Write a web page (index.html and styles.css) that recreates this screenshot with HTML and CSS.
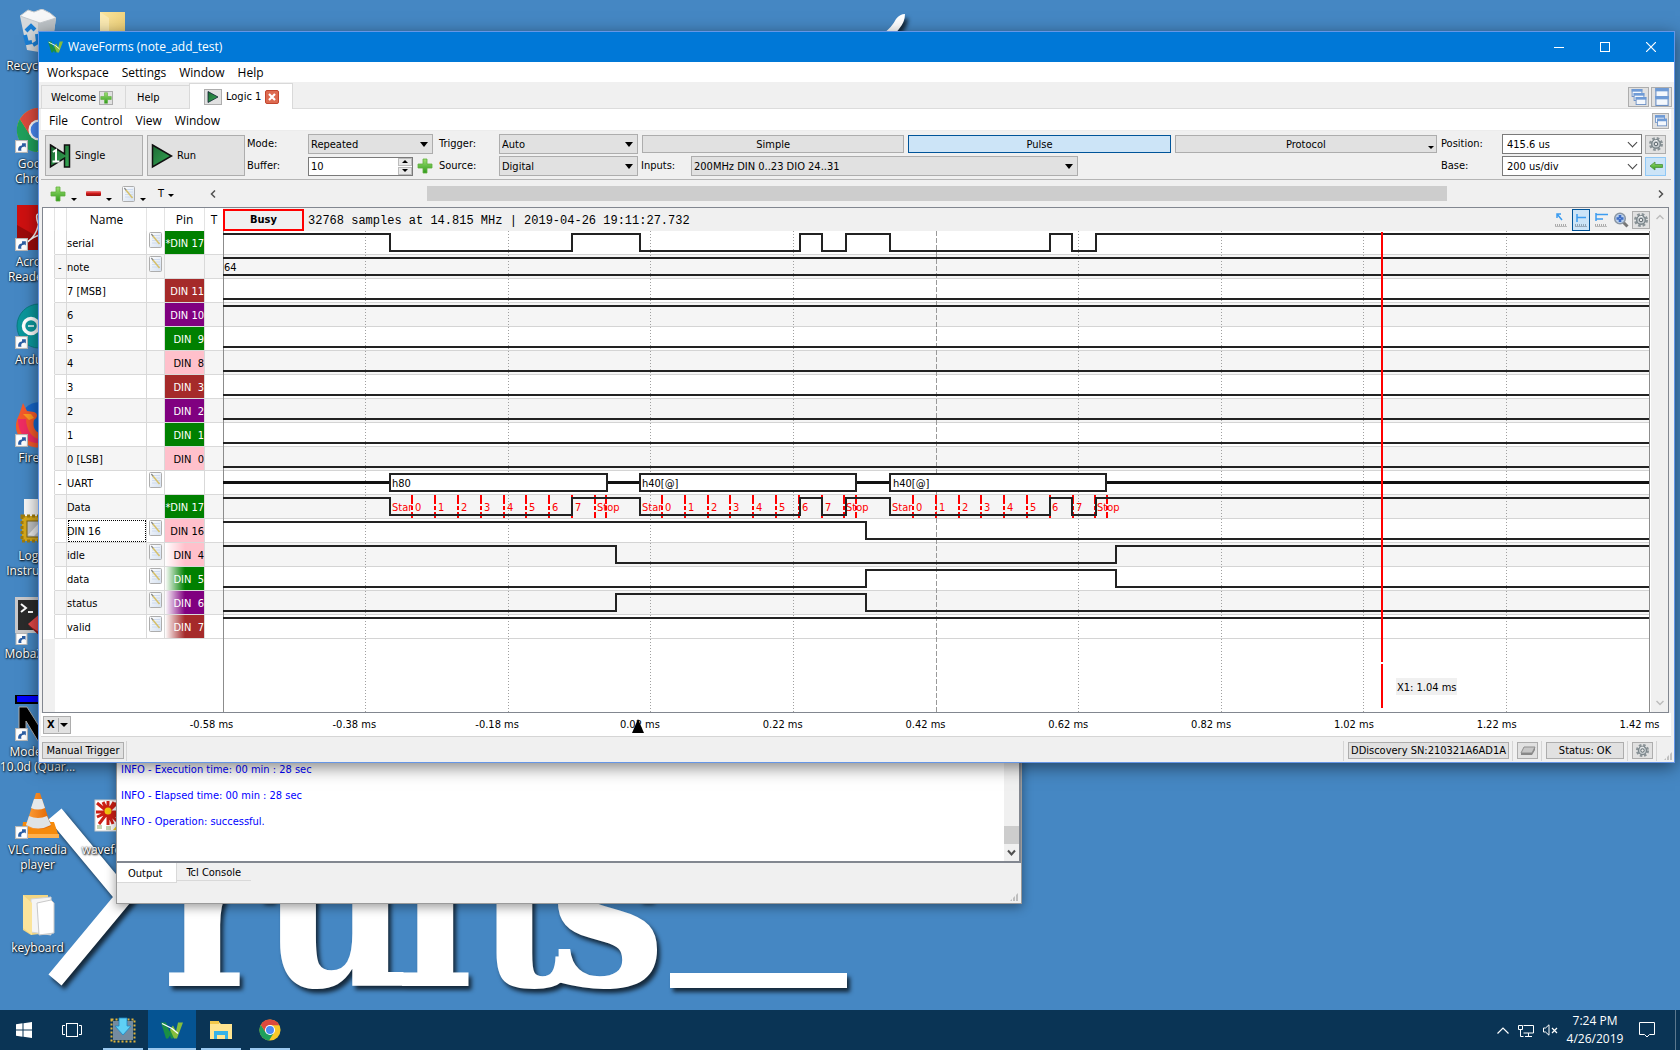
FILE: index.html
```html
<!DOCTYPE html>
<html lang="en">
<head>
<meta charset="utf-8">
<title>WaveForms (note_add_test)</title>
<link rel="stylesheet" href="styles.css">
</head>
<body>
<svg class="sprite" aria-hidden="true">
  <defs>
    <linearGradient id="gGreen" x1="0" y1="0" x2="0" y2="1"><stop offset="0" stop-color="#9be070"/><stop offset="1" stop-color="#2f9a1c"/></linearGradient>
    <linearGradient id="gRed" x1="0" y1="0" x2="0" y2="1"><stop offset="0" stop-color="#f08080"/><stop offset=".5" stop-color="#d01818"/><stop offset="1" stop-color="#8c1010"/></linearGradient>
    <linearGradient id="gPlay" x1="0" y1="0" x2="1" y2="1"><stop offset="0" stop-color="#1e6a35"/><stop offset="1" stop-color="#35a854"/></linearGradient>
    <linearGradient id="gPage" x1="0" y1="0" x2="1" y2="1"><stop offset="0" stop-color="#ffffff"/><stop offset="1" stop-color="#d4e0f0"/></linearGradient>
    <linearGradient id="gCone" x1="0" y1="0" x2="1" y2="0"><stop offset="0" stop-color="#ffa03a"/><stop offset="1" stop-color="#e06400"/></linearGradient>
    <linearGradient id="gFolder" x1="0" y1="0" x2="1" y2="1"><stop offset="0" stop-color="#fbe6a0"/><stop offset="1" stop-color="#e8c563"/></linearGradient>
  </defs>
  <symbol id="plus" viewBox="0 0 16 16"><path d="M6 1h4v5h5v4h-5v5H6v-5H1V6h5z" fill="url(#gGreen)" stroke="#5fae3c" stroke-width=".8"/></symbol>
  <symbol id="note" viewBox="0 0 13 16"><rect x=".5" y=".5" width="12" height="15" rx="1" fill="url(#gPage)" stroke="#adadad"/><path d="M3 3.500h8M3 6h8M3 8.500h8M3 11h8" stroke="#c6d6ee" stroke-width=".8"/><path d="M3.500 3.500l7 8.500" stroke="#d6c06a" stroke-width="1.500"/><path d="M2.300 2l1.700 2" stroke="#888" stroke-width="1.200"/></symbol>
  <symbol id="gear" viewBox="0 0 16 16"><circle cx="8" cy="8" r="5.700" fill="none" stroke="#8a9397" stroke-width="2.600" stroke-dasharray="2.600 1.880"/><circle cx="8" cy="8" r="4.300" fill="#c8ced1" stroke="#7b868b" stroke-width="1.400"/><path d="M5.500 5.500a3.500 3.500 0 0 1 4-.8" stroke="#fff" fill="none"/><circle cx="8" cy="8" r="1.800" fill="#e8e8e8" stroke="#59656c"/></symbol>
  <symbol id="win" viewBox="0 0 12 9"><rect x=".5" y=".5" width="11" height="8" fill="#f4f8fd" stroke="#6b8fc4"/><rect x="0" y="0" width="12" height="3" fill="#6f9bd6"/></symbol>
  <symbol id="shortcut" viewBox="0 0 12 12"><rect x=".5" y=".5" width="11" height="11" fill="#fff" stroke="#b8b8b8"/><path d="M3 10c-.5-3 1-5 3.500-5V3l3.500 0v4l-1-1c-3 .2-3.500 1.500-3 4z" fill="#2c5fa5"/></symbol>
  <symbol id="wlogo" viewBox="0 0 22 16"><path d="M0 0h5l3.500 9L12 3l3 7-3 6h-2l-1-3-2 3H5z" fill="#1a8f45"/><path d="M17 0h5l-6 16h-3l-4-9 3-4 3 6z" fill="#86bd3c"/><path d="M1 1l10 5 6 5" fill="none" stroke="#fff" stroke-width="1.300"/></symbol>
  <symbol id="chrome" viewBox="0 0 48 48"><circle cx="24" cy="24" r="23" fill="#f7c928"/><path d="M4 12.500A23 23 0 0 0 22 47L33 29l-9-5L14.500 29z" fill="#1fa05c"/><path d="M4 12.500A23 23 0 0 1 44.500 13.500H24l-7 3-3 12z" fill="#dc4a3d"/><circle cx="24" cy="24" r="11" fill="#fff"/><circle cx="24" cy="24" r="8.700" fill="#4a8af4"/></symbol>
</svg>

<main class="desktop">
  <svg class="wallpaper" aria-hidden="true">
    <g class="wallpaper-art">
      <path d="M884 33q8-6 12-14q4-5 9-5q0 8-6 15l-4 5z" fill="#fff"/>
      <polyline points="55,814 124,897 55,980" fill="none" stroke="#fff" stroke-width="17"/>
      <text class="wallpaper-word" y="986" x="162 260 395 476 549">ruits</text>
      <path d="M670 980.500H847" stroke="#fff" stroke-width="15"/>
    </g>
  </svg>

  <div class="icons">
    <div class="shortcut r1">
      <svg class="pic" viewBox="0 0 48 48"><path d="M6 7l36 2-5 36-24-4z" fill="#d5d9dc"/><path d="M24 12l18-3-5 36-13-2z" fill="#bcc2c6"/><path d="M6 7l8-6 6 2 8-3 8 4 6 5-16 5z" fill="#f6f7f8" stroke="#c3c8cc"/><g fill="none" stroke="#1a7fd6" stroke-width="4"><path d="M12 22l5-5 4 4"/><path d="M11 26l2 8 5-1"/><path d="M23 25l1 8-5 3"/></g></svg>
      <span>Recycle Bin</span>
    </div>
    <div class="shortcut r1 c2"><svg class="pic" viewBox="0 0 48 48"><path d="M11 3h25v44H11z" fill="url(#gFolder)"/><path d="M11 3l9 6v38h-9z" fill="#fbeab2"/></svg></div>
    <div class="shortcut r2"><svg class="pic" viewBox="0 0 48 48"><use href="#chrome" x="2" y="0" width="46" height="46"/><use href="#shortcut" x="1" y="33" width="13" height="13"/></svg><span>Google<br>Chrome</span></div>
    <div class="shortcut r3"><svg class="pic" viewBox="0 0 48 48"><rect x="3" y="0" width="44" height="45" fill="#cf1010"/><path d="M3 45V20l44 25z" fill="#9c0b0b"/><path d="M12 38c10-6 14-18 13-28-3-3-4 4 2 14 4 6 9 8 14 6-8-3-19-1-29 8z" fill="none" stroke="#fff" stroke-width="1.500"/><use href="#shortcut" x="1" y="33" width="13" height="13"/></svg><span>Acrobat<br>Reader DC</span></div>
    <div class="shortcut r4"><svg class="pic" viewBox="0 0 48 48"><circle cx="25" cy="23" r="22" fill="#0b979c" stroke="#0a7a80"/><circle cx="17" cy="23" r="7.500" fill="none" stroke="#fff" stroke-width="3.500"/><circle cx="33" cy="23" r="7.500" fill="none" stroke="#fff" stroke-width="3.500"/><path d="M14 23h6" stroke="#fff" stroke-width="1.500"/><use href="#shortcut" x="1" y="33" width="13" height="13"/></svg><span>Arduino</span></div>
    <div class="shortcut r5"><svg class="pic" viewBox="0 0 48 48"><circle cx="26" cy="22" r="21" fill="#1565c8"/><path d="M5 14l4-12 4 8 7 1c5 2 3 6 0 8-2 8 2 13 9 14l13-5v8a21 21 0 0 1-37-22z" fill="#f4592b"/><path d="M4 18c0 14 8 24 20 24l2-4c-8 0-14-10-14-20z" fill="#ef2d62"/><path d="M9 13l8 0 3 4-5 2z" fill="#ff9a1f"/><use href="#shortcut" x="1" y="33" width="13" height="13"/></svg><span>Firefox</span></div>
    <div class="shortcut r6"><svg class="pic" viewBox="0 0 48 48"><path d="M10 0h28v30H10z" fill="#f7f7f7"/><path d="M8 17h34v25H8z" fill="#d6a91c" stroke="#a07c0e" stroke-width="3" stroke-dasharray="3 2"/><rect x="13" y="22" width="24" height="16" fill="#bfc2c4" stroke="#7a6414"/><path d="M14 36l12-13h8L20 37z" fill="#ececec"/></svg><span>Logical<br>Instrument</span></div>
    <div class="shortcut r7"><svg class="pic" viewBox="0 0 48 48"><rect x="1" y="0" width="46" height="36" fill="#c9c9cb"/><rect x="4" y="3" width="44" height="30" fill="#2b2b2b"/><path d="M7 7l5 4-5 4M14 15h5" fill="none" stroke="#fff" stroke-width="2"/><path d="M14 27l14-12v26z" fill="#e44848"/><path d="M14 28l14 13v-4z" fill="#8e1d1d"/><use href="#shortcut" x="1" y="36" width="13" height="12"/></svg><span>MobaXterm</span></div>
    <div class="shortcut r8"><svg class="pic" viewBox="0 0 48 48"><rect x="2" y="0" width="45" height="8" fill="#00f" stroke="#000" stroke-width="2"/><path d="M5 12h8l17 27v7h-6L12 26v12H5z" fill="#000" stroke="#aaa"/><use href="#shortcut" x="1" y="33" width="13" height="13"/></svg><span>ModelSim<br>10.0d (Quar...</span></div>
    <div class="shortcut r9"><svg class="pic" viewBox="0 0 48 48"><path d="M9 29h31l5 15H7z" fill="#f58a0c"/><path d="M7 41h38v4H7z" fill="#ffb14d"/><path d="M22 0h4l11 33q-13 7-25 0z" fill="url(#gCone)"/><path d="M20 6h8l3 9q-7 3-14 0z" fill="#e6e8ea"/><path d="M15 23q9 4 18 0l4 9q-13 7-25 0z" fill="#dfe3e6"/><use href="#shortcut" x="1" y="33" width="13" height="13"/></svg><span>VLC media<br>player</span></div>
    <div class="shortcut r9 c2"><svg class="pic" viewBox="0 0 48 48"><rect x="6" y="7" width="34" height="31" fill="#fff" stroke="#ccc"/><g stroke="#cc1f14" stroke-width="3"><path d="M19 19L8 10M19 19V8M19 19l10-10M19 19h13M19 19l10 10M19 19v13M19 19L10 31M19 19H7M19 19L14 9M19 19l6-10M19 19L8 24M19 19l12 5M19 19l5 12"/></g><circle cx="19" cy="18" r="3.500" fill="#f3c40e"/><path d="M8 32h5v4H8zM17 33h5v4h-5z" fill="#c7d4b2"/><path d="M24 37l5-6 5 2v4z" fill="#f3d21a"/></svg><span>waveforms</span></div>
    <div class="shortcut r10"><svg class="pic" viewBox="0 0 48 48"><path d="M9 4h25v38l-17 2-8-5z" fill="#f3d682"/><path d="M17 8l20-2v38l-20-3z" fill="#f5f5f5" stroke="#d5d5d5"/><path d="M23 12l14-3 3 3v30l-15 2z" fill="#fff" stroke="#c9c9c9"/><path d="M9 4l9 8v32l-9-7z" fill="#fbe49b"/></svg><span>keyboard</span></div>
  </div>

  <section class="window console" aria-label="Programmer output">
    <div class="log-frame">
      <div class="log">
        <p>INFO - Execution time: 00 min : 28 sec</p>
        <p>INFO - Elapsed time: 00 min : 28 sec</p>
        <p>INFO - Operation: successful.</p>
      </div>
      <div class="log-scroll">
        <span class="log-thumb"></span>
        <svg width="9" height="8" viewBox="0 0 9 8"><path d="M1 1.500l3.500 4L8 1.500" fill="none" stroke="#505050" stroke-width="2"/></svg>
      </div>
    </div>
    <div class="console-tabs">
      <button class="ctab active">Output</button><button class="ctab">Tcl Console</button>
    </div>
    <span class="grip"></span>
  </section>

  <section class="window main" aria-label="WaveForms">
    <header class="titlebar">
      <svg width="15" height="12"><use href="#wlogo"/></svg>
      <h1>WaveForms (note_add_test)</h1>
      <div class="sysbuttons">
        <button aria-label="Minimize"><svg width="10" height="10"><path d="M0 5.500h10" stroke="#fff"/></svg></button>
        <button aria-label="Maximize"><svg width="10" height="10"><rect x=".5" y=".5" width="9" height="9" fill="none" stroke="#fff"/></svg></button>
        <button aria-label="Close"><svg width="10" height="10"><path d="M0 0l10 10M10 0L0 10" stroke="#fff" stroke-width="1.200"/></svg></button>
      </div>
    </header>
    <nav class="menubar">
      <button>Workspace</button><button>Settings</button><button>Window</button><button>Help</button>
    </nav>
    <div class="tabbar">
      <div class="tab welcome"><button class="plain">Welcome</button><button class="mini" aria-label="New instrument"><svg width="12" height="12"><use href="#plus"/></svg></button></div>
      <div class="tab help"><button class="plain">Help</button></div>
      <div class="tab current"><button class="mini play" aria-label="Run"><svg width="12" height="14" viewBox="0 0 12 14"><path d="M1 1.500l10 5.500-10 5.500z" fill="url(#gPlay)" stroke="#123" stroke-width=".8"/></svg></button><button class="plain">Logic 1</button><button class="mini close" aria-label="Close tab"><svg width="8" height="8"><path d="M1 1l6 6M7 1L1 7" stroke="#fff" stroke-width="2.200"/></svg></button></div>
      <div class="tab-tools">
        <button class="mini" aria-label="Cascade"><svg width="18" height="18"><use href="#win" x="1" y="1" width="12" height="8"/><use href="#win" x="3" y="5" width="12" height="8"/><use href="#win" x="5" y="9" width="12" height="8"/></svg></button>
        <button class="mini" aria-label="Tile"><svg width="18" height="18"><use href="#win" x="2" y="0" width="14" height="10"/><use href="#win" x="2" y="8" width="14" height="10"/></svg></button>
      </div>
    </div>

    <div class="pane">
      <nav class="menubar inner">
        <button>File</button><button>Control</button><button>View</button><button>Window</button>
        <button class="mini undock" aria-label="Undock"><svg width="14" height="14"><use href="#win" x="1" y="1" width="10" height="8"/><use href="#win" x="3" y="4" width="10" height="9"/></svg></button>
      </nav>

      <div class="toolbar">
        <button class="big"><svg width="22" height="26" viewBox="0 0 22 26"><path d="M1.500 2l14 9V2h5v22h-5v-9l-14 9z" fill="url(#gPlay)" stroke="#111" stroke-width="1.500"/><path d="M4 9l3-2v11M3.500 18.500h7" fill="none" stroke="#fff" stroke-width="2"/></svg>Single</button>
        <button class="big"><svg width="22" height="26" viewBox="0 0 22 26"><path d="M1.500 2l19 11-19 11z" fill="url(#gPlay)" stroke="#111" stroke-width="1.500"/></svg>Run</button>
        <div class="settings">
          <label for="mode">Mode:</label>
          <div class="drop"><select id="mode"><option>Repeated</option></select></div>
          <label class="in" for="trig">Trigger:</label>
          <div class="drop"><select id="trig"><option>Auto</option></select></div>
          <div class="wide triple"><button>Simple</button><button class="on">Pulse</button><button class="arrowed">Protocol</button></div>
          <label class="in4" for="pos">Position:</label>
          <div class="drop combo"><select id="pos"><option>415.6 us</option></select></div>
          <button class="mini" aria-label="Settings"><svg width="16" height="16"><use href="#gear"/></svg></button>

          <label for="buf">Buffer:</label>
          <div class="buffer"><div class="spin"><input id="buf" value="10"><span class="steps"><i class="up"></i><i class="down"></i></span></div><button class="plain" aria-label="Add buffer"><svg width="16" height="16"><use href="#plus"/></svg></button></div>
          <label class="in" for="src">Source:</label>
          <div class="drop"><select id="src"><option>Digital</option></select></div>
          <div class="wide inputs"><label for="inp">Inputs:</label><div class="drop"><select id="inp"><option>200MHz DIN 0..23 DIO 24..31</option></select></div></div>
          <label class="in4" for="base">Base:</label>
          <div class="drop combo"><select id="base"><option>200 us/div</option></select></div>
          <button class="mini lit" aria-label="Back"><svg width="14" height="10" viewBox="0 0 14 10"><path d="M1 5l5-4v2.500h7.500v3H6V9z" fill="url(#gGreen)" stroke="#4c8f3c" stroke-width=".8"/></svg></button>
        </div>
      </div>

      <div class="channelbar">
        <button class="plain menu-btn" aria-label="Add"><svg width="16" height="16"><use href="#plus"/></svg></button>
        <button class="plain menu-btn" aria-label="Remove"><svg width="15" height="5"><rect width="15" height="5" rx="1" fill="url(#gRed)"/></svg></button>
        <button class="plain menu-btn" aria-label="Edit"><svg width="13" height="16"><use href="#note"/></svg></button>
        <button class="plain menu-btn text">T</button>
        <div class="hscroll">
          <svg width="6" height="8"><path d="M5 .5L1.500 4L5 7.500" fill="none" stroke="#505050" stroke-width="1.500"/></svg>
          <div class="htrack"><span class="hthumb"></span></div>
          <svg width="6" height="8"><path d="M1 .5L4.500 4L1 7.500" fill="none" stroke="#505050" stroke-width="1.500"/></svg>
        </div>
      </div>

      <div class="scope">
        <div class="channels">
          <table>
            <colgroup><col class="w12"><col class="w12"><col class="w80"><col class="w18"><col class="w40"><col class="w18"></colgroup>
            <thead><tr><th></th><th></th><th>Name</th><th></th><th>Pin</th><th>T</th></tr></thead>
            <tbody>
              <tr><td></td><td></td><td>serial</td><td><svg><use href="#note"/></svg></td><td class="green">*DIN 17</td><td></td></tr>
              <tr><td></td><td>-</td><td>note</td><td><svg><use href="#note"/></svg></td><td></td><td></td></tr>
              <tr><td></td><td></td><td>7 [MSB]</td><td></td><td class="brown">DIN 11</td><td></td></tr>
              <tr><td></td><td></td><td>6</td><td></td><td class="purple">DIN 10</td><td></td></tr>
              <tr><td></td><td></td><td>5</td><td></td><td class="green">DIN&nbsp; 9</td><td></td></tr>
              <tr><td></td><td></td><td>4</td><td></td><td class="pink">DIN&nbsp; 8</td><td></td></tr>
              <tr><td></td><td></td><td>3</td><td></td><td class="brown">DIN&nbsp; 3</td><td></td></tr>
              <tr><td></td><td></td><td>2</td><td></td><td class="purple">DIN&nbsp; 2</td><td></td></tr>
              <tr><td></td><td></td><td>1</td><td></td><td class="green">DIN&nbsp; 1</td><td></td></tr>
              <tr><td></td><td></td><td>0 [LSB]</td><td></td><td class="pink">DIN&nbsp; 0</td><td></td></tr>
              <tr><td></td><td>-</td><td>UART</td><td><svg><use href="#note"/></svg></td><td></td><td></td></tr>
              <tr><td></td><td></td><td>Data</td><td></td><td class="green">*DIN 17</td><td></td></tr>
              <tr><td></td><td></td><td class="focused">DIN 16</td><td><svg><use href="#note"/></svg></td><td class="pink">DIN 16</td><td></td></tr>
              <tr><td></td><td></td><td>idle</td><td><svg><use href="#note"/></svg></td><td class="pink fade">DIN&nbsp; 4</td><td></td></tr>
              <tr><td></td><td></td><td>data</td><td><svg><use href="#note"/></svg></td><td class="green fade">DIN&nbsp; 5</td><td></td></tr>
              <tr><td></td><td></td><td>status</td><td><svg><use href="#note"/></svg></td><td class="purple fade">DIN&nbsp; 6</td><td></td></tr>
              <tr><td></td><td></td><td>valid</td><td><svg><use href="#note"/></svg></td><td class="brown fade">DIN&nbsp; 7</td><td></td></tr>
            </tbody>
          </table>
        </div>

        <div class="plot">
          <div class="plot-head">
            <span class="state">Busy</span>
            <span class="info">32768 samples at 14.815 MHz | 2019-04-26 19:11:27.732</span>
            <div class="plot-tools">
              <button class="plain" aria-label="Cursor"><svg width="14" height="14"><path d="M1 12h12" stroke="#aaa" stroke-width="2" stroke-dasharray="1 1"/><path d="M1 13.500h12" stroke="#bbb"/><path d="M3 5V1h4M3 1l5 6" fill="none" stroke="#3c9cf0" stroke-width="1.500"/></svg></button>
              <button class="plain sel" aria-label="Pulse measure"><svg width="14" height="14"><path d="M1 12h12" stroke="#8fa6b8" stroke-width="2" stroke-dasharray="1 1"/><path d="M1 13.500h12" stroke="#9ab"/><path d="M3 1v8M3 4.500h9" fill="none" stroke="#3c9cf0" stroke-width="1.500"/></svg></button>
              <button class="plain" aria-label="Measure"><svg width="14" height="14"><path d="M1 12h12" stroke="#aaa" stroke-width="2" stroke-dasharray="1 1"/><path d="M1 13.500h12" stroke="#bbb"/><path d="M2 0v8M2 1.500h12M2 6h7" fill="none" stroke="#3c9cf0" stroke-width="1.500"/></svg></button>
              <button class="plain" aria-label="Zoom"><svg width="16" height="16"><path d="M10 10l4.500 4.500" stroke="#777" stroke-width="3"/><circle cx="7" cy="6.500" r="5.300" fill="#b9d0ee" stroke="#8a96a3" stroke-width="1.500"/><path d="M7 3v7M3.500 6.500h7" stroke="#3d6cc4" stroke-width="2.600" stroke-dasharray="3 1"/></svg></button>
              <button class="mini" aria-label="Options"><svg width="16" height="16"><use href="#gear"/></svg></button>
            </div>
          </div>
          <svg class="waves" viewBox="0 0 1428 481" preserveAspectRatio="xMinYMin slice" role="img" aria-label="Logic waveforms">
            <path class="band" d="M0 35.500H1427M0 83.500H1427M0 131.500H1427M0 179.500H1427M0 227.500H1427M0 275.500H1427M0 323.500H1427M0 371.500H1427"/>
            <path class="sep" d="M0 23.500H1427M0 47.500H1427M0 71.500H1427M0 95.500H1427M0 119.500H1427M0 143.500H1427M0 167.500H1427M0 191.500H1427M0 215.500H1427M0 239.500H1427M0 263.500H1427M0 287.500H1427M0 311.500H1427M0 335.500H1427M0 359.500H1427M0 383.500H1427M0 407.500H1427"/>
            <path class="edge" d="M.5 0V481M1426.500 0V481"/>
            <path class="dots" d="M142.500 0V481M285.500 0V481M427.500 0V481M570.500 0V481M855.500 0V481M998.500 0V481M1140.500 0V481M1283.500 0V481"/>
            <path class="dashes" d="M713.500 0V481"/>
            <path class="wave" d="M0 3H167V20H349V3H417V20H577V3H599V20H623V3H667V20H827V3H849V20H873V3H1426"/>
            <path class="wave" d="M0 27H1426M0 44H1426M0 68H1426M0 75H1426M0 116H1426M0 140H1426M0 164H1426M0 188H1426M0 212H1426M0 236H1426"/>
            <path class="bus" d="M0 251.500H167M384 251.500H417M633 251.500H667M883 251.500H1426"/>
            <path class="box" d="M167 243H384V260H167zM417 243H633V260H417zM667 243H883V260H667z"/>
            <path class="bits" d="M189 264V287M212 264V287M235 264V287M258 264V287M281 264V287M303 264V287M326 264V287M349 264V287M372 264V287M383 264V287M439 264V287M462 264V287M485 264V287M507 264V287M530 264V287M553 264V287M576 264V287M599 264V287M621 264V287M633 264V287M690 264V287M713 264V287M736 264V287M758 264V287M781 264V287M804 264V287M827 264V287M850 264V287M872 264V287M884 264V287"/>
            <path class="wave" d="M0 267H167V284H349V267H417V284H577V267H599V284H623V267H667V284H827V267H849V284H873V267H1426"/>
            <path class="wave" d="M0 291H643V308H1426M0 315H393V332H893V315H1426M0 356H643V339H893V356H1426M0 380H393V363H643V380H1426M0 387H1426"/>
            <g class="val"><text x="1" y="40">64</text><text x="169" y="256">h80</text><text x="419" y="256">h40[@]</text><text x="670" y="256">h40[@]</text></g>
            <g class="bit">
              <text x="169" y="280">Star</text><text x="192" y="280">0</text><text x="215" y="280">1</text><text x="238" y="280">2</text><text x="261" y="280">3</text><text x="284" y="280">4</text><text x="306" y="280">5</text><text x="329" y="280">6</text><text x="352" y="280">7</text><text x="374" y="280">Stop</text>
              <text x="419" y="280">Star</text><text x="442" y="280">0</text><text x="465" y="280">1</text><text x="488" y="280">2</text><text x="510" y="280">3</text><text x="533" y="280">4</text><text x="556" y="280">5</text><text x="579" y="280">6</text><text x="602" y="280">7</text><text x="623" y="280">Stop</text>
              <text x="669" y="280">Star</text><text x="693" y="280">0</text><text x="716" y="280">1</text><text x="739" y="280">2</text><text x="761" y="280">3</text><text x="784" y="280">4</text><text x="807" y="280">5</text><text x="829" y="280">6</text><text x="853" y="280">7</text><text x="874" y="280">Stop</text>
            </g>
            <path class="cursor" d="M1159 1V431M1159 433V477"/>
            <rect class="tag" x="1173" y="447" width="61" height="17"/>
            <text class="val" x="1174" y="460">X1: 1.04 ms</text>
          </svg>
        </div>

        <div class="vscroll">
          <svg width="8" height="6"><path d="M.5 5L4 1.500L7.500 5" fill="none" stroke="#bcbcbc" stroke-width="1.500"/></svg>
          <svg width="8" height="6"><path d="M.5 1L4 4.500L7.500 1" fill="none" stroke="#bcbcbc" stroke-width="1.500"/></svg>
        </div>
      </div>

      <div class="axis">
        <button class="xbtn"><b>X</b><i></i></button>
        <div class="ticks">
          <span>-0.58 ms</span><span>-0.38 ms</span><span>-0.18 ms</span><span class="trigger">0.02 ms</span><span>0.22 ms</span><span>0.42 ms</span><span>0.62 ms</span><span>0.82 ms</span><span>1.02 ms</span><span>1.22 ms</span><span>1.42 ms</span>
        </div>
      </div>
    </div>

    <footer class="statusbar">
      <button class="manual">Manual Trigger</button>
      <span class="rule push"></span>
      <span class="rule"></span>
      <button class="device">DDiscovery SN:210321A6AD1A</button>
      <span class="rule"></span>
      <button class="sq" aria-label="Device"><svg width="16" height="10"><path d="M4 1h11l-3 6H1z" fill="#c6c6c6" stroke="#8f8f8f"/><path d="M1 7h11l3-6v3l-3 5H1z" fill="#888"/></svg></button>
      <span class="rule"></span>
      <button class="ok">Status: OK</button>
      <span class="rule"></span>
      <button class="sq" aria-label="Preferences"><svg width="15" height="15"><use href="#gear"/></svg></button>
      <span class="rule"></span>
      <span class="grip"></span>
    </footer>
  </section>
</main>

<nav class="taskbar">
  <button aria-label="Start"><svg width="16" height="16"><path d="M0 2.200L6.500 1.300V7.500H0zM7.500 1.200L16 0V7.500H7.500zM0 8.500H6.500V14.700L0 13.800zM7.500 8.500H16V16L7.500 14.800z" fill="#fff"/></svg></button>
  <button class="view" aria-label="Task view"><svg width="20" height="14"><rect x="4.500" y=".5" width="11" height="13" fill="none" stroke="#fff"/><path d="M3 2.500H.5v9H3M17 2.500h2.500v9H17" fill="none" stroke="#fff"/></svg></button>
  <button class="app" aria-label="Adept"><svg width="26" height="26"><rect x="1.500" y="2.500" width="23" height="22" fill="none" stroke="#e0b33c" stroke-width="2" stroke-dasharray="2 2"/><rect x="3" y="4" width="20" height="19" fill="#748ba0"/><path d="M9 1h8v8h4l-8 9-8-9h4z" fill="#5fd0f5" stroke="#1d86c4" stroke-width=".8"/></svg></button>
  <button class="app active" aria-label="WaveForms"><svg width="22" height="17"><use href="#wlogo"/></svg></button>
  <button class="app" aria-label="File Explorer"><svg width="22" height="18"><path d="M0 1h9l2 2h11v15H0z" fill="#ffe591"/><path d="M0 0h9v3H0z" fill="#f3c84b"/><path d="M4 10h14v8h-3v-4H7v4H4z" fill="#35b2e8"/></svg></button>
  <button class="app" aria-label="Chrome"><svg width="22" height="22"><use href="#chrome"/></svg></button>
  <div class="tray">
    <svg width="12" height="7"><path d="M.5 6.500L6 1l5.500 5.500" fill="none" stroke="#fff" stroke-width="1.200"/></svg>
    <svg width="16" height="13"><path d="M5.500 1.500h10v7.500h-10M10.500 9v3M7 12.500h7M.5 1.500h4v4h-4zM2.500 5.500v7h3" fill="none" stroke="#fff"/></svg>
    <svg class="sound" width="15" height="12"><path d="M.5 4h2L6 .8v10.400L2.500 8h-2z" fill="none" stroke="#fff"/><path d="M9 4l5 5M14 4L9 9" stroke="#fff" stroke-width="1.200"/></svg>
    <time>7:24 PM<br>4/26/2019</time>
    <svg class="bell" width="16" height="16"><path d="M.5 .5h15v12h-5L8 15l-2.500-2.500h-5z" fill="none" stroke="#fff"/></svg>
    <span class="peek"></span>
  </div>
</nav>
</body>
</html>
```
FILE: styles.css
```css
* { box-sizing: border-box; }

body {
  margin: 0;
  height: 100vh;
  display: flex;
  flex-direction: column;
  overflow: hidden;
  background: #4587c3;
  font: 11px/14px "DejaVu Sans Condensed", "DejaVu Sans", sans-serif;
  color: #000;
}

button, input, select {
  font: inherit;
  color: inherit;
  margin: 0;
  padding: 0;
  border: 0;
  border-radius: 0;
  background: none;
  appearance: none;
}

svg { display: block; flex: none; }
p, h1 { margin: 0; }
.sprite { position: absolute; width: 0; height: 0; }

/* desktop */
.desktop { position: relative; flex: 1; overflow: hidden; }
.wallpaper { position: absolute; inset: 0; width: 100%; height: 100%; }
.wallpaper-art { filter: drop-shadow(3px 4px 2px rgba(0, 0, 0, .7)); }
.wallpaper-word { font: bold 230px "DejaVu Serif Condensed", "DejaVu Serif", serif; fill: #fff; }

.icons {
  position: relative;
  display: grid;
  grid-template-columns: 75px 75px;
  grid-template-rows: repeat(10, 98px);
  padding-top: 9px;
  font: 12px/15px "Open Sans", sans-serif;
}
.shortcut {
  grid-column: 1;
  display: flex;
  flex-direction: column;
  align-items: center;
  color: #fff;
  text-align: center;
  white-space: nowrap;
  text-shadow: 1px 1px 2px #000, 0 0 2px #000;
}
.shortcut.c2 { grid-column: 2; }
.pic { width: 48px; height: 48px; margin-bottom: 1px; }
.r1 { grid-row: 1; } .r2 { grid-row: 2; } .r3 { grid-row: 3; } .r4 { grid-row: 4; } .r5 { grid-row: 5; }
.r6 { grid-row: 6; } .r7 { grid-row: 7; } .r8 { grid-row: 8; } .r9 { grid-row: 9; } .r10 { grid-row: 10; }

/* windows */
.window { position: absolute; display: flex; flex-direction: column; background: #f0f0f0; }
.main {
  left: 38px;
  right: 5px;
  top: 31px;
  border: 1px solid #6596e6;
  box-shadow: 0 4px 16px rgba(0, 0, 0, .5);
}
.console {
  left: 116px;
  top: 700px;
  width: 906px;
  border: 1px solid #9a9a9a;
  box-shadow: 0 3px 10px rgba(0, 0, 0, .4);
}
.log-frame { display: flex; height: 162px; background: #fff; border-right: 2px solid #828790; border-bottom: 2px solid #828790; }
.log { flex: 1; padding: 62px 4px 0; color: #00f; display: flex; flex-direction: column; gap: 12px; }
.log-scroll { width: 15px; background: #f0f0f0; display: flex; flex-direction: column; justify-content: flex-end; align-items: center; gap: 5px; padding-bottom: 4px; }
.log-thumb { width: 15px; height: 18px; background: #cdcdcd; }
.console-tabs { display: flex; align-items: flex-start; height: 40px; }
.ctab { height: 18px; padding: 2px 10px 0 9px; border-bottom: 1px solid #d9d9d9; }
.ctab.active { height: 20px; padding: 2px 14px 0 11px; background: #fff; border-right: 1px solid #d9d9d9; }
.grip {
  width: 9px;
  height: 9px;
  background: repeating-linear-gradient(90deg, #bfbfbf 0 2px, transparent 2px 3px);
  clip-path: polygon(100% 0, 100% 100%, 0 100%);
}
.console .grip { position: absolute; right: 2px; bottom: 2px; }

.titlebar { display: flex; align-items: center; height: 30px; background: #0078d7; color: #fff; padding-left: 9px; gap: 5px; }
.titlebar h1 { flex: 1; font: 12px/16px "Open Sans", sans-serif; }
.sysbuttons { display: flex; }
.sysbuttons button { width: 46px; height: 30px; display: grid; place-items: center; }

.menubar { display: flex; align-items: center; gap: 13px; height: 20px; padding: 2px 8px 0; background: #fff; font: 12px/16px "Open Sans", sans-serif; }
.menubar.inner { height: 22px; border-bottom: 1px solid #ececec; }
.undock { margin-left: auto; width: 17px; height: 16px; margin-right: -6px; }

.tabbar { display: flex; align-items: flex-end; height: 27px; padding-left: 2px; border-bottom: 1px solid #dcdcdc; }
.tab { display: flex; align-items: center; height: 23px; padding-top: 2px; border: 1px solid #d9d9d9; border-bottom: 0; padding-left: 9px; }
.welcome { width: 85px; gap: 3px; }
.help { width: 63px; border-left: 0; border-right: 0; padding-left: 11px; }
.tab.current { width: 104px; height: 26px; margin-bottom: -1px; background: #fff; padding-left: 14px; gap: 4px; padding-top: 0; }
.mini { display: grid; place-items: center; background: #e1e1e1; border: 1px solid #adadad; }
.tab .mini { width: 14px; height: 14px; }
.tab .mini.play { width: 18px; height: 16px; }
.tab .mini.close { background: #dd6a50; border-color: #c2452d; border-radius: 2px; }
.tab-tools { margin: 0 2px 1px auto; display: flex; gap: 2px; }
.tab-tools .mini { width: 21px; height: 20px; }

.pane { margin: 0 3px 0 2px; border-bottom: 1px solid #d5d5d5; background: #f0f0f0; }

.toolbar { display: flex; padding: 3px 5px 3px 4px; border-bottom: 1px solid #b4b4b4; height: 49px; }
.big { width: 98px; height: 41px; margin: 1px 4px 0 0; display: flex; align-items: center; gap: 4px; padding-left: 3px; background: #e1e1e1; border: 1px solid #adadad; }
.big + .big { margin-right: 2px; }
.settings {
  flex: 1;
  display: grid;
  grid-template-columns: 61px 125px 66px 139px minmax(0, 1fr) 65px 140px 24px;
  grid-template-rows: 20px 20px;
  row-gap: 2px;
  align-items: center;
}
.settings .in { padding-left: 6px; }
.settings .in4 { padding-left: 4px; }
.settings > .mini { justify-self: end; width: 21px; height: 19px; }
.settings > .mini.lit { background: #cce4f7; border-color: #90c8f6; }
.drop { position: relative; height: 20px; }
.drop select { width: 100%; height: 20px; padding: 2px 0 0 2px; background: #e1e1e1; border: 1px solid #adadad; }
.drop::after { content: ""; position: absolute; right: 5px; top: 8px; border: 4px solid transparent; border-top: 5px solid #000; border-bottom: 0; pointer-events: none; }
.combo select { background: #fff; border-color: #7a7a7a; padding-left: 4px; }
.combo::after { right: 6px; top: 5px; width: 6px; height: 6px; border: 0; border-right: 1px solid #444; border-bottom: 1px solid #444; transform: rotate(45deg); }
.wide { padding-left: 4px; display: flex; align-items: center; }
.triple { gap: 4px; }
.triple button { flex: 1; height: 18px; padding-top: 2px; background: #e1e1e1; border: 1px solid #adadad; }
.triple .on { background: #cce4f7; border-color: #005499; }
.arrowed { position: relative; }
.arrowed::after { content: ""; position: absolute; right: 2px; bottom: 3px; border: 3px solid transparent; border-top-color: #000; border-bottom: 0; }
.wide.inputs { padding-left: 3px; }
.inputs label { width: 50px; }
.inputs .drop { width: 387px; }
.buffer { display: flex; align-items: center; gap: 4px; }
.spin { display: flex; width: 105px; height: 19px; background: #fff; border: 1px solid #7a7a7a; }
.spin input { flex: 1; min-width: 0; padding: 2px 0 0 2px; }
.steps { width: 14px; display: flex; flex-direction: column; gap: 1px; }
.steps i { flex: 1; background: #e8e8e8; border: 1px solid #bcbcbc; display: grid; place-items: center; }
.steps i::after { content: ""; border: 3px solid transparent; border-top-width: 0; border-bottom-color: #000; }
.steps .down::after { border-top: 3px solid #000; border-bottom: 0; }

.channelbar { display: flex; align-items: center; height: 27px; padding: 0 2px 0 9px; }
.menu-btn { display: flex; align-items: center; width: 36px; height: 20px; }
.menu-btn::after { content: ""; margin: 11px 0 0 5px; border: 3px solid transparent; border-top-color: #000; border-bottom: 0; }
.menu-btn.text::after { margin: 4px 0 0 4px; }
.menu-btn.text { width: 47px; }
.hscroll { flex: 1; height: 16px; display: flex; align-items: center; padding: 0 5px; }
.htrack { flex: 1; height: 15px; margin: 0 11px; padding: 0 14%; }
.hthumb { display: block; height: 15px; margin: 0 -4px; background: #cdcdcd; }

.scope { display: flex; margin: 0 2px 0 1px; border: 1px solid #828790; background: #fff; }
.channels { width: 180px; background: linear-gradient(90deg, #f0f0f0 12px, #fff 12px); }
table { width: 180px; table-layout: fixed; border-collapse: separate; border-spacing: 0; background: #fff; }
.w12 { width: 12px; } .w18 { width: 18px; } .w40 { width: 40px; } .w80 { width: 80px; }
th { height: 23px; padding: 0; font: 12px/16px "Open Sans", sans-serif; border-right: 1px solid #e3e3e3; }
th:last-child { border-right: 0; }
td { height: 24px; padding: 2px 0 0; border-right: 1px solid #d9d9d9; border-bottom: 1px solid #d9d9d9; white-space: nowrap; overflow: visible; }
td:first-child { border-bottom-color: #fff; }
td:last-child { border-right: 0; }
td:nth-child(2) { padding-left: 3px; }
td:nth-child(4) { padding-top: 0; }
td:nth-child(5) { text-align: right; }
td svg { width: 13px; height: 16px; margin: 0 0 6px 2px; }
tbody tr:nth-child(even) td:not(:first-child) { background-color: #f5f5f5; }
tbody tr .green.green, tbody tr:nth-child(even) td.green.green { background-color: #008000; color: #fff; }
tbody tr .brown.brown, tbody tr:nth-child(even) td.brown.brown { background-color: #a52a2a; color: #fff; }
tbody tr .purple.purple, tbody tr:nth-child(even) td.purple.purple { background-color: #800080; color: #fff; }
tbody tr .pink.pink, tbody tr:nth-child(even) td.pink.pink { background-color: #ffc0cb; }
.fade { background-image: linear-gradient(90deg, #fff, transparent 20px); }
.focused { outline: 1px dotted #000; outline-offset: -2px; }

.plot { flex: 1; min-width: 0; }
.plot-head { display: flex; align-items: center; height: 23px; background: #f0f0f0; }
.state { width: 81px; height: 22px; border: 2px solid #f00; display: grid; place-items: center; font-weight: bold; }
.info { margin-left: 4px; padding-top: 2px; font: 12px/16px "Liberation Mono", monospace; }
.plot-tools { margin: 0 1px 0 auto; display: flex; align-items: center; gap: 2px; }
.plot-tools button { width: 18px; height: 22px; display: grid; place-items: center; }
.plot-tools .mini { height: 18px; }
.plot-tools .sel { background: #cce4f7; border: 1px solid #005499; }
.waves { width: 100%; height: 481px; }
.waves path { fill: none; }
.waves .band { stroke: #f5f5f5; stroke-width: 23; }
.waves .sep { stroke: #d4d4d4; }
.waves .edge { stroke: #8c8c8c; }
.waves .dots { stroke: #a0a0a0; stroke-dasharray: 1 2; }
.waves .dashes { stroke: #999; stroke-dasharray: 5 2; }
.waves .wave { stroke: #222; stroke-width: 2; }
.waves .bus { stroke: #111; stroke-width: 3; }
.waves .box { stroke: #222; stroke-width: 2; fill: #fff; }
.waves .bits { stroke: #f00; stroke-width: 2; stroke-dasharray: 9 2 4 2; }
.waves .cursor { stroke: #f00; stroke-width: 2; }
.val { fill: #000; }
.bit { fill: #f00; }
.tag { fill: #f0f0f0; }
.vscroll { width: 17px; background: #f0f0f0; display: flex; flex-direction: column; justify-content: space-between; align-items: center; padding: 6px 0; }

.axis { display: flex; align-items: center; height: 23px; background: #fff; padding: 0 11px 0 2px; }
.xbtn { display: flex; align-items: center; justify-content: space-between; width: 28px; height: 18px; padding: 0 2px 0 3px; background: #e1e1e1; border: 1px solid #adadad; }
.xbtn i { border: 4px solid transparent; border-top-color: #000; border-bottom: 0; }
.xbtn b { border-right: 1px solid #adadad; padding-right: 3px; }
.ticks { flex: 1; margin-left: 120px; display: flex; justify-content: space-between; }
.ticks span { width: 41px; display: flex; justify-content: center; white-space: nowrap; }
.trigger { position: relative; }
.trigger::after { content: ""; position: absolute; left: 13px; top: 1px; border: 6px solid transparent; border-top: 0; border-bottom: 14px solid #000; }

.statusbar { display: flex; align-items: center; height: 25px; padding: 2px 1px 0 3px; }
.statusbar button { height: 17px; background: #e1e1e1; border: 1px solid #adadad; display: grid; place-items: center; }
.rule { width: 1px; height: 20px; background: #d5d5d5; margin: 0 4px 0 3px; }
.rule.push { margin: 0 auto 0 2px; }
.manual { width: 82px; }
.device { width: 161px; }
.ok { width: 78px; }
.sq { width: 21px; }
.statusbar .grip { margin: 10px 0 0 3px; }

/* taskbar */
.taskbar { position: relative; display: flex; height: 40px; background: #0a3455; color: #fff; }
.taskbar button { width: 48px; height: 40px; display: grid; place-items: center; }
.taskbar .view { margin-right: 3px; }
.taskbar .app { margin-right: 1px; background: linear-gradient(#9ac8ef, #9ac8ef) center bottom / 40px 2px no-repeat; }
.taskbar .app.active { background-color: #055493; background-size: 48px 2px; }
.tray { margin-left: auto; display: flex; align-items: center; font: 12px/18px "Open Sans", sans-serif; text-align: center; }
.tray > svg { margin-right: 9px; }
.tray .sound { margin-right: 6px; }
.tray time { width: 62px; margin-right: 13px; }
.tray .bell { margin-right: 20px; }
.peek { width: 5px; height: 40px; border-left: 1px solid #5c788e; }
```
